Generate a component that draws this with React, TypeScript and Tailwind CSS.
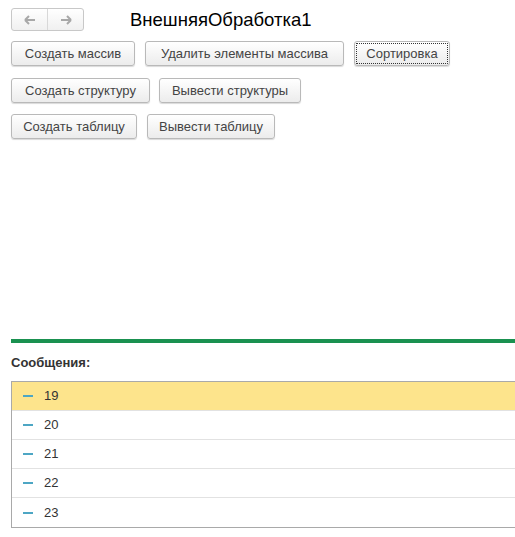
import React from 'react';

const font = { fontFamily: '"Liberation Sans", Arial, sans-serif' };

const Btn: React.FC<{ label: string; w: string; focused?: boolean }> = ({ label, w, focused }) => (
  <button
    className={`${w} h-[25px] flex items-center justify-center whitespace-nowrap rounded-[3px] border border-[#b9b9b9] bg-gradient-to-b from-white to-[#ececec] shadow-[0_1px_1px_rgba(0,0,0,0.15)] text-[13px] text-[#444] leading-none ${
      focused ? 'outline-1 outline-dotted outline-[#333] -outline-offset-[3px]' : ''
    }`}
  >
    {label}
  </button>
);

const rows = ['19', '20', '21', '22', '23'];

export default function App() {
  return (
    <div className="w-[515px] h-[537px] bg-white overflow-hidden" style={font}>
      <div className="pl-[11px] pt-[8px]">
        <div className="flex items-center h-[23px]">
          <div className="flex h-[23px] w-[73px] rounded-[3px] border border-[#c8c8c8] bg-gradient-to-b from-white to-[#f0f0f0]">
            <div className="flex-1 flex items-center justify-center border-r border-[#d8d8d8]">
              <svg width="12" height="10" viewBox="0 0 12 10">
                <path d="M1 5h10M1 5l4-4M1 5l4 4" stroke="#a8a8a8" strokeWidth="2" fill="none" />
              </svg>
            </div>
            <div className="flex-1 flex items-center justify-center">
              <svg width="12" height="10" viewBox="0 0 12 10">
                <path d="M11 5H1M11 5L7 1M11 5L7 9" stroke="#a8a8a8" strokeWidth="2" fill="none" />
              </svg>
            </div>
          </div>
          <div className="ml-[46px] mt-[2px] text-[18.5px] text-black leading-none">ВнешняяОбработка1</div>
        </div>

        <div className="flex gap-[10px] mt-[10px]">
          <Btn label="Создать массив" w="w-[124px]" />
          <Btn label="Удалить элементы массива" w="w-[199px]" />
          <Btn label="Сортировка" w="w-[96px]" focused />
        </div>
        <div className="flex gap-[9px] mt-[12px]">
          <Btn label="Создать структуру" w="w-[139px]" />
          <Btn label="Вывести структуры" w="w-[142px]" />
        </div>
        <div className="flex gap-[10px] mt-[11px]">
          <Btn label="Создать таблицу" w="w-[126px]" />
          <Btn label="Вывести таблицу" w="w-[128px]" />
        </div>

        <div className="mt-[200px] h-[4px] bg-[#1a9150]" />
        <div className="mt-[12px] text-[13px] font-bold text-[#333] leading-[16px]">Сообщения:</div>
        <div className="mt-[10px] border-l border-t border-b border-[#a9a9a9]">
          {rows.map((r, i) => (
            <div
              key={r}
              className={`flex items-center h-[29px] ${i === 0 ? 'bg-[#fde48c]' : 'bg-white'} ${
                i < rows.length - 1 ? 'border-b border-[#e2e2e2]' : ''
              }`}
            >
              <div className="ml-[11px] w-[10px] h-[2px] bg-[#4da6c4]" />
              <div className="ml-[11px] text-[13px] text-[#333]">{r}</div>
            </div>
          ))}
        </div>
      </div>
    </div>
  );
}
